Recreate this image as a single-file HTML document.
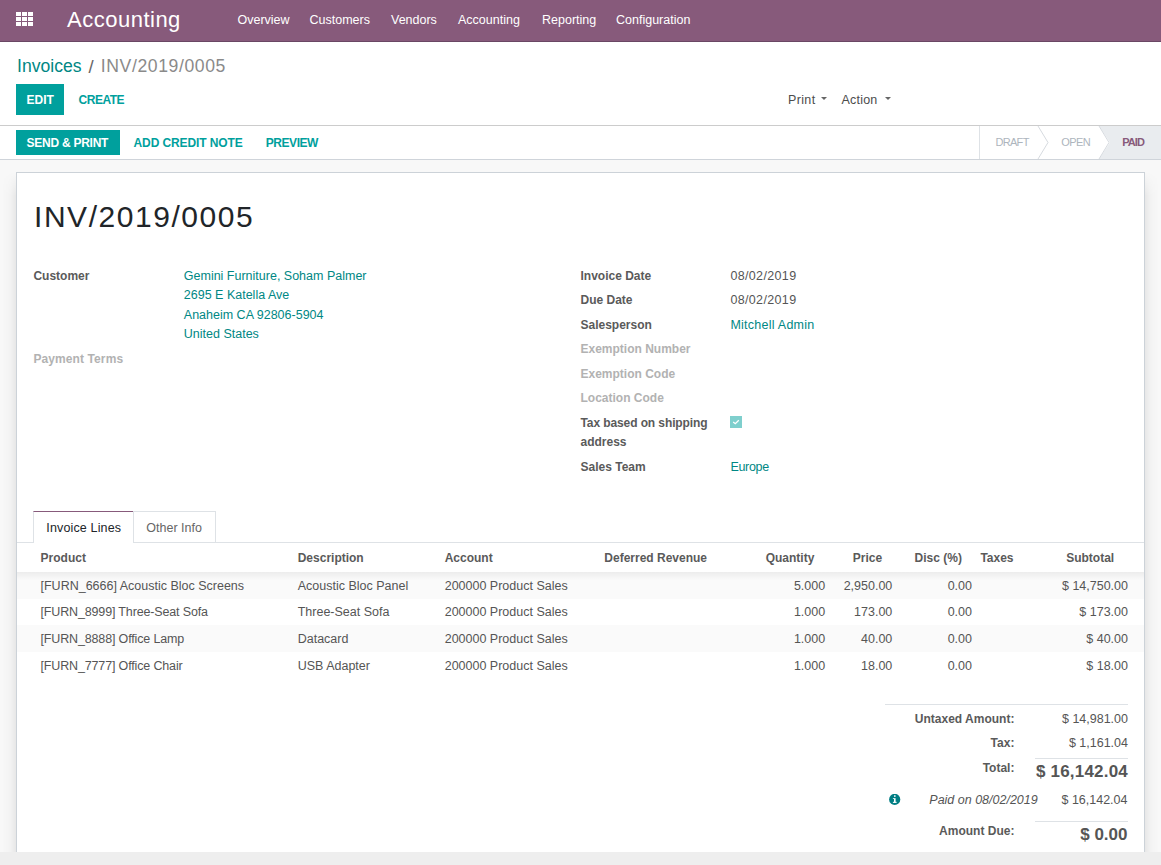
<!DOCTYPE html>
<html><head><meta charset="utf-8"><style>
html,body{margin:0;padding:0;width:1161px;height:865px;overflow:hidden;background:#fff;}
body{position:relative;font-family:"Liberation Sans",sans-serif;}
.t{position:absolute;line-height:1;white-space:nowrap;}
.r{position:absolute;}
.caret{position:absolute;width:0;height:0;border-left:3px solid transparent;border-right:3px solid transparent;border-top:3.5px solid #666;}
</style></head><body>
<div class="r" style="left:0px;top:0px;width:1161px;height:41px;background:#875A7B;"></div>
<div class="r" style="left:0px;top:41px;width:1161px;height:1px;background:#6a4764;"></div>
<div class="r" style="left:16px;top:12px;width:5px;height:4px;background:#fff;"></div>
<div class="r" style="left:16px;top:17px;width:5px;height:4px;background:#fff;"></div>
<div class="r" style="left:16px;top:22px;width:5px;height:4px;background:#fff;"></div>
<div class="r" style="left:22px;top:12px;width:5px;height:4px;background:#fff;"></div>
<div class="r" style="left:22px;top:17px;width:5px;height:4px;background:#fff;"></div>
<div class="r" style="left:22px;top:22px;width:5px;height:4px;background:#fff;"></div>
<div class="r" style="left:28px;top:12px;width:5px;height:4px;background:#fff;"></div>
<div class="r" style="left:28px;top:17px;width:5px;height:4px;background:#fff;"></div>
<div class="r" style="left:28px;top:22px;width:5px;height:4px;background:#fff;"></div>
<div class="t" style="top:9px;font-size:22px;color:#fff;letter-spacing:0.5px;left:67px;">Accounting</div>
<div class="t" style="top:14px;font-size:12.5px;color:#fff;left:237.5px;">Overview</div>
<div class="t" style="top:14px;font-size:12.5px;color:#fff;left:309.5px;">Customers</div>
<div class="t" style="top:14px;font-size:12.5px;color:#fff;left:391px;">Vendors</div>
<div class="t" style="top:14px;font-size:12.5px;color:#fff;left:458px;">Accounting</div>
<div class="t" style="top:14px;font-size:12.5px;color:#fff;left:542px;">Reporting</div>
<div class="t" style="top:14px;font-size:12.5px;color:#fff;left:616px;">Configuration</div>
<div class="t" style="top:58px;font-size:17.6px;color:#008784;left:17px;">Invoices</div>
<div class="t" style="top:58px;font-size:18.5px;color:#666;left:88.5px;">/</div>
<div class="t" style="top:58px;font-size:17.6px;color:#8a8a8a;letter-spacing:0.6px;left:100.8px;">INV/2019/0005</div>
<div class="r" style="left:16px;top:84px;width:48px;height:31px;background:#00A09D;"></div>
<div class="t" style="top:94px;font-size:12px;color:#fff;font-weight:700;left:26.6px;">EDIT</div>
<div class="t" style="top:94px;font-size:12px;color:#00A09D;font-weight:700;letter-spacing:-0.5px;left:78.6px;">CREATE</div>
<div class="t" style="top:94px;font-size:12.5px;color:#4c4c4c;letter-spacing:0.35px;left:788px;">Print</div>
<div class="t" style="top:94px;font-size:12.5px;color:#4c4c4c;letter-spacing:0.2px;left:841.5px;">Action</div>
<div class="caret" style="left:821px;top:97px"></div>
<div class="caret" style="left:885px;top:97px"></div>
<div class="r" style="left:0px;top:125px;width:1161px;height:1px;background:#cccccc;"></div>
<div class="r" style="left:16px;top:130px;width:104px;height:25px;background:#00A09D;"></div>
<div class="t" style="top:137px;font-size:12px;color:#fff;font-weight:700;letter-spacing:-0.25px;left:26.5px;">SEND &amp; PRINT</div>
<div class="t" style="top:137px;font-size:12px;color:#00A09D;font-weight:700;letter-spacing:-0.1px;left:133.5px;">ADD CREDIT NOTE</div>
<div class="t" style="top:137px;font-size:12px;color:#00A09D;font-weight:700;letter-spacing:-0.45px;left:265.8px;">PREVIEW</div>
<div class="r" style="left:0px;top:159px;width:1161px;height:1px;background:#cfd4da;"></div>
<div class="r" style="left:979px;top:126px;width:1px;height:33px;background:#dee2e6;"></div>
<svg class="r" style="left:1030px;top:126px" width="131" height="33" viewBox="0 0 131 33">
<polygon points="69,0 80,16.5 69,33 131,33 131,0" fill="#e9ecef"/>
<polyline points="8,0 18,16.5 8,33" fill="none" stroke="#d6dadf" stroke-width="1"/>
<polyline points="69,0 79,16.5 69,33" fill="none" stroke="#d6dadf" stroke-width="1"/>
</svg>
<div class="t" style="top:137px;font-size:11px;color:#adb5bd;letter-spacing:-0.7px;left:995.5px;">DRAFT</div>
<div class="t" style="top:137px;font-size:11px;color:#adb5bd;letter-spacing:-0.6px;left:1061.3px;">OPEN</div>
<div class="t" style="top:137px;font-size:11px;color:#875A7B;font-weight:700;letter-spacing:-0.9px;left:1122.2px;">PAID</div>
<div class="r" style="left:0px;top:160px;width:1161px;height:692px;background:#f8f8f8;"></div>
<div class="r" style="left:0px;top:172px;width:16px;height:680px;background:linear-gradient(to left, rgba(0,0,0,0.065), rgba(0,0,0,0.02) 6px, rgba(0,0,0,0) 14px);-webkit-mask-image:linear-gradient(transparent,#000 24px);"></div>
<div class="r" style="left:1145px;top:172px;width:16px;height:680px;background:linear-gradient(to right, rgba(0,0,0,0.065), rgba(0,0,0,0.02) 6px, rgba(0,0,0,0) 14px);-webkit-mask-image:linear-gradient(transparent,#000 24px);"></div>
<div class="r" style="left:16px;top:172px;width:1129px;height:680px;background:#fff;border:1px solid #ccd2d8;border-bottom:none;box-sizing:border-box;"></div>
<div class="r" style="left:0px;top:852px;width:1161px;height:13px;background:#eeeeee;"></div>
<div class="t" style="top:202px;font-size:30px;color:#212529;letter-spacing:1.55px;left:34px;">INV/2019/0005</div>
<div class="t" style="top:270px;font-size:12px;color:#5a5a5a;font-weight:700;left:33.4px;">Customer</div>
<div class="t" style="top:270px;font-size:12.5px;color:#008784;left:183.8px;">Gemini Furniture, Soham Palmer</div>
<div class="t" style="top:289px;font-size:12.5px;color:#008784;left:183.8px;">2695 E Katella Ave</div>
<div class="t" style="top:309px;font-size:12.5px;color:#008784;left:183.8px;">Anaheim CA 92806-5904</div>
<div class="t" style="top:328px;font-size:12.5px;color:#008784;left:183.8px;">United States</div>
<div class="t" style="top:353px;font-size:12px;color:#b2b2b2;font-weight:700;letter-spacing:0.1px;left:33.4px;">Payment Terms</div>
<div class="t" style="top:270px;font-size:12px;color:#5a5a5a;font-weight:700;left:580.5px;">Invoice Date</div>
<div class="t" style="top:270px;font-size:12.5px;color:#555555;letter-spacing:0.35px;left:730.4px;">08/02/2019</div>
<div class="t" style="top:294px;font-size:12px;color:#5a5a5a;font-weight:700;left:580.5px;">Due Date</div>
<div class="t" style="top:294px;font-size:12.5px;color:#555555;letter-spacing:0.35px;left:730.4px;">08/02/2019</div>
<div class="t" style="top:319px;font-size:12px;color:#5a5a5a;font-weight:700;left:580.5px;">Salesperson</div>
<div class="t" style="top:319px;font-size:12.5px;color:#008784;letter-spacing:0.25px;left:730.4px;">Mitchell Admin</div>
<div class="t" style="top:343px;font-size:12px;color:#b2b2b2;font-weight:700;left:580.5px;">Exemption Number</div>
<div class="t" style="top:368px;font-size:12px;color:#b2b2b2;font-weight:700;left:580.5px;">Exemption Code</div>
<div class="t" style="top:392px;font-size:12px;color:#b2b2b2;font-weight:700;left:580.5px;">Location Code</div>
<div class="t" style="top:417px;font-size:12px;color:#5a5a5a;font-weight:700;letter-spacing:-0.1px;left:580.5px;">Tax based on shipping</div>
<div class="t" style="top:436px;font-size:12px;color:#5a5a5a;font-weight:700;left:580.5px;">address</div>
<div class="r" style="left:730px;top:416px;width:12px;height:12px;background:#7fcfcd"></div>
<svg class="r" style="left:730px;top:416px" width="12" height="12" viewBox="0 0 12 12"><polyline points="3.2,6.0 5.3,7.7 8.8,4.2" fill="none" stroke="#fff" stroke-width="1.3"/></svg>
<div class="t" style="top:461px;font-size:12px;color:#5a5a5a;font-weight:700;left:580.5px;">Sales Team</div>
<div class="t" style="top:461px;font-size:12.5px;color:#008784;letter-spacing:-0.3px;left:730.4px;">Europe</div>
<div class="r" style="left:17px;top:542px;width:1127px;height:1px;background:#dee2e6;"></div>
<div class="r" style="left:33px;top:511px;width:101px;height:32px;background:#fff;border:1px solid #dee2e6;border-top:1px solid #875A7B;border-bottom:none;box-sizing:border-box"></div>
<div class="r" style="left:133px;top:511px;width:83px;height:31px;border:1px solid #dee2e6;border-left:none;border-bottom:none;box-sizing:border-box"></div>
<div class="t" style="top:522px;font-size:12.5px;color:#212529;letter-spacing:0.15px;left:46.3px;">Invoice Lines</div>
<div class="t" style="top:522px;font-size:12.5px;color:#666;left:146.3px;">Other Info</div>
<div class="t" style="top:552px;font-size:12px;color:#5a5a5a;font-weight:700;left:40.6px;">Product</div>
<div class="t" style="top:552px;font-size:12px;color:#5a5a5a;font-weight:700;left:297.7px;">Description</div>
<div class="t" style="top:552px;font-size:12px;color:#5a5a5a;font-weight:700;left:444.7px;">Account</div>
<div class="t" style="top:552px;font-size:12px;color:#5a5a5a;font-weight:700;left:604.3px;">Deferred Revenue</div>
<div class="t" style="top:552px;font-size:12px;color:#5a5a5a;font-weight:700;right:346.70000000000005px;">Quantity</div>
<div class="t" style="top:552px;font-size:12px;color:#5a5a5a;font-weight:700;right:278.9px;">Price</div>
<div class="t" style="top:552px;font-size:12px;color:#5a5a5a;font-weight:700;right:199.10000000000002px;">Disc (%)</div>
<div class="t" style="top:552px;font-size:12px;color:#5a5a5a;font-weight:700;left:980.4px;">Taxes</div>
<div class="t" style="top:552px;font-size:12px;color:#5a5a5a;font-weight:700;right:46.799999999999955px;">Subtotal</div>
<div class="r" style="left:17px;top:572px;width:1127px;height:27px;background:#fafafa;"></div>
<div class="t" style="top:580px;font-size:12.5px;color:#555555;left:40.5px;">[FURN_6666] Acoustic Bloc Screens</div>
<div class="t" style="top:580px;font-size:12.5px;color:#555555;left:297.7px;">Acoustic Bloc Panel</div>
<div class="t" style="top:580px;font-size:12.5px;color:#555555;left:444.7px;">200000 Product Sales</div>
<div class="t" style="top:580px;font-size:12.5px;color:#555555;right:335.79999999999995px;">5.000</div>
<div class="t" style="top:580px;font-size:12.5px;color:#555555;right:268.70000000000005px;">2,950.00</div>
<div class="t" style="top:580px;font-size:12.5px;color:#555555;right:189px;">0.00</div>
<div class="t" style="top:580px;font-size:12.5px;color:#555555;right:33px;">$ 14,750.00</div>
<div class="t" style="top:606px;font-size:12.5px;color:#555555;letter-spacing:-0.15px;left:40.5px;">[FURN_8999] Three-Seat Sofa</div>
<div class="t" style="top:606px;font-size:12.5px;color:#555555;left:297.7px;">Three-Seat Sofa</div>
<div class="t" style="top:606px;font-size:12.5px;color:#555555;left:444.7px;">200000 Product Sales</div>
<div class="t" style="top:606px;font-size:12.5px;color:#555555;right:335.79999999999995px;">1.000</div>
<div class="t" style="top:606px;font-size:12.5px;color:#555555;right:268.70000000000005px;">173.00</div>
<div class="t" style="top:606px;font-size:12.5px;color:#555555;right:189px;">0.00</div>
<div class="t" style="top:606px;font-size:12.5px;color:#555555;right:33px;">$ 173.00</div>
<div class="r" style="left:17px;top:625px;width:1127px;height:27px;background:#fafafa;"></div>
<div class="t" style="top:633px;font-size:12.5px;color:#555555;letter-spacing:-0.15px;left:40.5px;">[FURN_8888] Office Lamp</div>
<div class="t" style="top:633px;font-size:12.5px;color:#555555;left:297.7px;">Datacard</div>
<div class="t" style="top:633px;font-size:12.5px;color:#555555;left:444.7px;">200000 Product Sales</div>
<div class="t" style="top:633px;font-size:12.5px;color:#555555;right:335.79999999999995px;">1.000</div>
<div class="t" style="top:633px;font-size:12.5px;color:#555555;right:268.70000000000005px;">40.00</div>
<div class="t" style="top:633px;font-size:12.5px;color:#555555;right:189px;">0.00</div>
<div class="t" style="top:633px;font-size:12.5px;color:#555555;right:33px;">$ 40.00</div>
<div class="t" style="top:660px;font-size:12.5px;color:#555555;letter-spacing:-0.15px;left:40.5px;">[FURN_7777] Office Chair</div>
<div class="t" style="top:660px;font-size:12.5px;color:#555555;left:297.7px;">USB Adapter</div>
<div class="t" style="top:660px;font-size:12.5px;color:#555555;left:444.7px;">200000 Product Sales</div>
<div class="t" style="top:660px;font-size:12.5px;color:#555555;right:335.79999999999995px;">1.000</div>
<div class="t" style="top:660px;font-size:12.5px;color:#555555;right:268.70000000000005px;">18.00</div>
<div class="t" style="top:660px;font-size:12.5px;color:#555555;right:189px;">0.00</div>
<div class="t" style="top:660px;font-size:12.5px;color:#555555;right:33px;">$ 18.00</div>
<div class="r" style="left:17px;top:572px;width:1127px;height:8px;background:linear-gradient(rgba(0,0,0,0.055),rgba(0,0,0,0));"></div>
<div class="r" style="left:885px;top:704px;width:243px;height:1px;background:#dee2e6;"></div>
<div class="t" style="top:713px;font-size:12px;color:#5a5a5a;font-weight:700;right:146.60000000000002px;">Untaxed Amount:</div>
<div class="t" style="top:713px;font-size:12.5px;color:#555555;right:33px;">$ 14,981.00</div>
<div class="t" style="top:737px;font-size:12px;color:#5a5a5a;font-weight:700;right:146.60000000000002px;">Tax:</div>
<div class="t" style="top:737px;font-size:12.5px;color:#555555;right:33px;">$ 1,161.04</div>
<div class="r" style="left:1035px;top:758px;width:93px;height:1px;background:#dee2e6;"></div>
<div class="t" style="top:762px;font-size:12px;color:#5a5a5a;font-weight:700;right:146.60000000000002px;">Total:</div>
<div class="t" style="top:763px;font-size:17px;color:#555555;font-weight:700;letter-spacing:0.2px;right:33px;">$ 16,142.04</div>
<svg class="r" style="left:889px;top:794px" width="12" height="12" viewBox="0 0 12 12"><circle cx="5.7" cy="5.4" r="5.6" fill="#017e84"/><rect x="5.0" y="1.3" width="1.6" height="1.5" fill="#fff"/><rect x="5.0" y="4.2" width="1.6" height="4.2" fill="#fff"/><rect x="3.9" y="4.2" width="1.2" height="0.8" fill="#fff"/><rect x="3.9" y="7.8" width="3.7" height="1.1" fill="#fff"/></svg>
<div class="t" style="top:794px;font-size:12.5px;color:#555555;font-style:italic;left:929.3px;">Paid on 08/02/2019</div>
<div class="t" style="top:794px;font-size:12.5px;color:#555555;right:33.5px;">$ 16,142.04</div>
<div class="r" style="left:1035px;top:821px;width:93px;height:1px;background:#dee2e6;"></div>
<div class="t" style="top:825px;font-size:12px;color:#5a5a5a;font-weight:700;right:146.60000000000002px;">Amount Due:</div>
<div class="t" style="top:826px;font-size:17px;color:#555555;font-weight:700;right:33.5px;">$ 0.00</div>
</body></html>
